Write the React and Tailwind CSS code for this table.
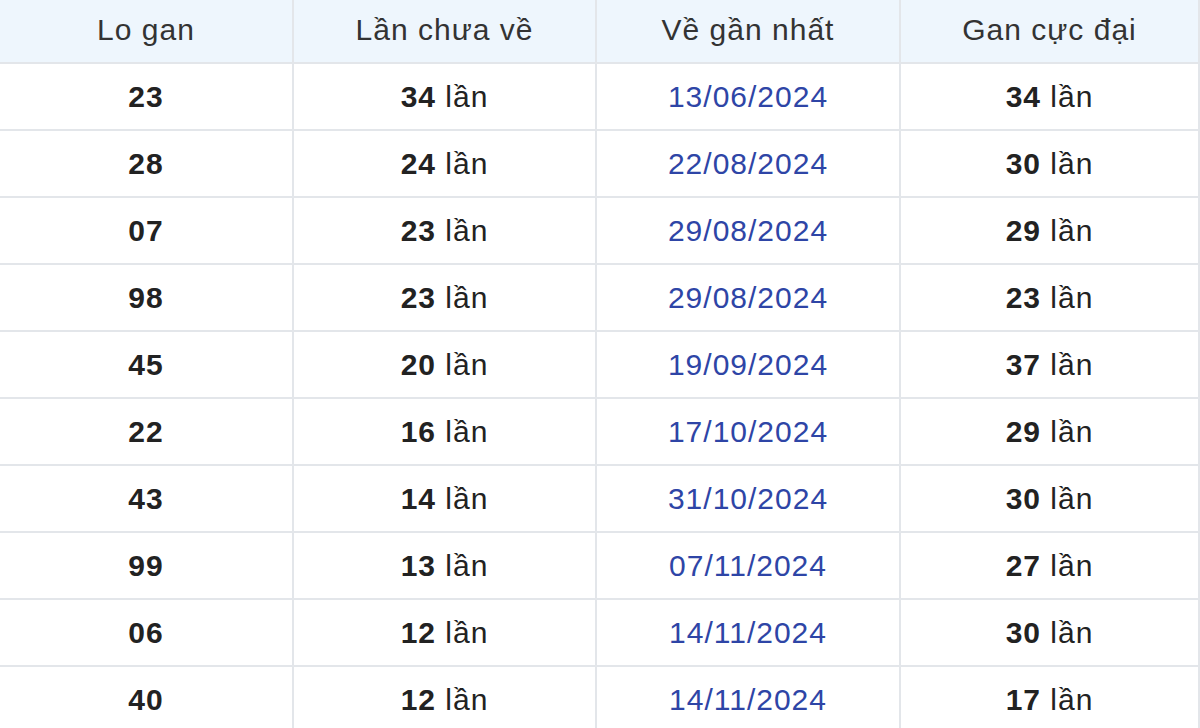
import React from "react";

const rows = [
  ["23", "34", "13/06/2024", "34"],
  ["28", "24", "22/08/2024", "30"],
  ["07", "23", "29/08/2024", "29"],
  ["98", "23", "29/08/2024", "23"],
  ["45", "20", "19/09/2024", "37"],
  ["22", "16", "17/10/2024", "29"],
  ["43", "14", "31/10/2024", "30"],
  ["99", "13", "07/11/2024", "27"],
  ["06", "12", "14/11/2024", "30"],
  ["40", "12", "14/11/2024", "17"],
];

const cell = "flex items-center justify-center border-b-2 border-r-2 border-[#e3e6ea]";

const App = () => {
  return (
    <div className="w-[1200px] h-[728px] overflow-hidden bg-white text-[#222] text-[30px] tracking-[1px]" style={{ fontFamily: '"Liberation Sans", Arial, sans-serif' }}>
      <div className="grid grid-cols-[294px_303px_304px_299px]">
        {["Lo gan", "Lần chưa về", "Về gần nhất", "Gan cực đại"].map((h) => (
          <div key={h} className={`${cell} h-[64px] bg-[#eef6fd] text-[#333] pb-[4px]`}>{h}</div>
        ))}
        {rows.map((r, i) => (
          <React.Fragment key={i}>
            <div className={`${cell} h-[67px] font-bold`}>{r[0]}</div>
            <div className={`${cell} h-[67px]`}>
              <span className="font-bold">{r[1]}</span>&nbsp;lần
            </div>
            <div className={`${cell} h-[67px] text-[#2e45a6]`}>{r[2]}</div>
            <div className={`${cell} h-[67px]`}>
              <span className="font-bold">{r[3]}</span>&nbsp;lần
            </div>
          </React.Fragment>
        ))}
      </div>
    </div>
  );
};

export default App;
